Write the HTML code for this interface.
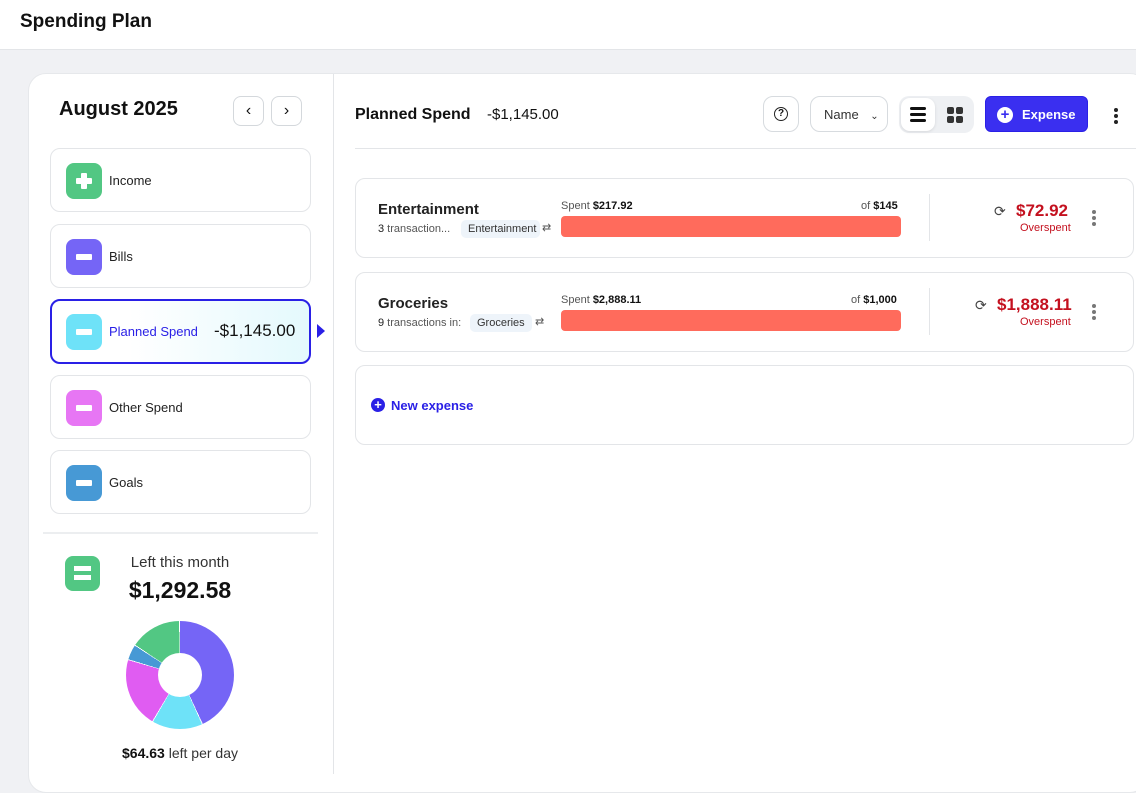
<!DOCTYPE html>
<html><head><meta charset="utf-8"><style>
*{box-sizing:border-box;margin:0;padding:0}
body{width:1136px;height:770px;overflow:hidden;background:#f0f1f4;font-family:"Liberation Sans",sans-serif;color:#111;position:relative}
.a{position:absolute}
.hdr{left:0;top:0;width:1136px;height:50px;background:#fff;border-bottom:1px solid #e3e5e8}
.main{left:28px;top:73px;width:1120px;height:720px;background:#fff;border-radius:18px;border:1px solid #e6e8eb}
.cat{left:50px;width:261px;height:64px;border:1px solid #e3e5e8;border-radius:10px;background:#fff}
.ic{position:absolute;left:15px;top:14px;width:36px;height:36px;border-radius:8px}
.ic i{position:absolute;left:10px;top:15px;width:16px;height:6px;background:#fff;border-radius:1px}
.cat span{position:absolute;left:58px;top:24px;font-size:13px;color:#222}
.btn{border:1px solid #d7dbdf;border-radius:10px;background:#fff;height:36px;top:96px}
.card{left:355px;width:779px;border:1px solid #e3e5e8;border-radius:10px;background:#fff}
.bar{position:absolute;left:205px;width:340px;height:21px;background:#ff6b5c;border-radius:4px}
.sm{font-size:11px;color:#555}
.tag{position:absolute;background:#eef4fa;border-radius:5px;font-size:11px;color:#333;padding:3px 7px}
.red{color:#c4111f}
.dots{position:absolute;width:4px}
.dots b{display:block;width:4px;height:4px;border-radius:50%;background:#777;margin-bottom:2px}
</style></head><body>
<div class="a hdr"><div class="a" style="left:20px;top:11px;font-size:19px;font-weight:bold;color:#111">Spending Plan</div></div>
<div class="a main"></div>
<div class="a" style="left:333px;top:74px;width:1px;height:700px;background:#e3e5e8"></div>

<div class="a" style="left:59px;top:98px;font-size:20px;font-weight:bold">August 2025</div>
<div class="a" style="left:233px;top:96px;width:31px;height:30px;border:1px solid #d4d8dc;border-radius:8px;text-align:center;line-height:27px;font-size:16px">‹</div>
<div class="a" style="left:271px;top:96px;width:31px;height:30px;border:1px solid #d4d8dc;border-radius:8px;text-align:center;line-height:27px;font-size:16px">›</div>

<div class="a cat" style="top:148px"><div class="ic" style="background:#52c783"><i style="left:10px;top:15px;width:16px;height:6px"></i><i style="left:15px;top:10px;width:6px;height:16px"></i></div><span>Income</span></div>
<div class="a cat" style="top:224px"><div class="ic" style="background:#7565f6"><i></i></div><span>Bills</span></div>
<div class="a cat" style="top:299px;height:65px;border:2px solid #2a20e6;background:linear-gradient(90deg,#fff 30%,#e4f9fd)"><div class="ic" style="left:14px;top:13px;background:#6ee2f8"><i></i></div><span style="left:57px;top:23px;color:#2a20e6">Planned Spend</span><span style="left:162px;top:20px;font-size:17px;color:#111">-$1,145.00</span></div>
<div class="a" style="left:317px;top:324px;width:0;height:0;border-top:7px solid transparent;border-bottom:7px solid transparent;border-left:8px solid #2a20e6"></div>
<div class="a cat" style="top:375px"><div class="ic" style="background:#e776f4"><i></i></div><span>Other Spend</span></div>
<div class="a cat" style="top:450px"><div class="ic" style="background:#4799d5"><i></i></div><span>Goals</span></div>
<div class="a" style="left:43px;top:532px;width:275px;height:2px;background:#eceef0"></div>

<div class="a" style="left:65px;top:556px;width:35px;height:35px;border-radius:8px;background:#52c783"><i class="a" style="left:9px;top:10px;width:17px;height:5px;background:#fff"></i><i class="a" style="left:9px;top:19px;width:17px;height:5px;background:#fff"></i></div>
<div class="a" style="left:80px;top:554px;width:200px;text-align:center;font-size:15px;color:#333">Left this month</div>
<div class="a" style="left:80px;top:577px;width:200px;text-align:center;font-size:23px;font-weight:bold">$1,292.58</div>
<div class="a" style="left:126px;top:621px;width:108px;height:108px;border-radius:50%;background:conic-gradient(#7565f6 0 155deg,#fff 155deg 156deg,#6ee2f8 156deg 210deg,#fff 210deg 211deg,#e05cf2 211deg 286deg,#fff 286deg 287deg,#4799d5 287deg 303deg,#fff 303deg 304deg,#52c783 304deg 359deg,#fff 359deg)"></div>
<div class="a" style="left:158px;top:653px;width:44px;height:44px;border-radius:50%;background:#fff"></div>
<div class="a" style="left:80px;top:745px;width:200px;text-align:center;font-size:14px;color:#333"><b style="color:#111">$64.63</b> left per day</div>

<div class="a" style="left:355px;top:106px;font-size:16px;font-weight:bold">Planned Spend</div>
<div class="a" style="left:487px;top:106px;font-size:15px">-$1,145.00</div>
<div class="a btn" style="left:763px;width:36px"><div class="a" style="left:10px;top:10px;width:14px;height:14px;border:1.5px solid #222;border-radius:50%;font-size:10px;text-align:center;line-height:11px;font-weight:bold">?</div></div>
<div class="a btn" style="left:810px;width:78px;font-size:13px;color:#333;padding:10px 0 0 13px">Name <span style="margin-left:8px;font-size:10px">⌄</span></div>
<div class="a" style="left:899px;top:96px;width:75px;height:37px;border-radius:10px;background:#eef0f3"></div>
<div class="a" style="left:901px;top:98px;width:34px;height:33px;border-radius:9px;background:#fff;box-shadow:0 1px 3px rgba(0,0,0,.1)"><b class="a" style="left:9px;top:9px;width:16px;height:3px;background:#111;border-radius:2px"></b><b class="a" style="left:9px;top:15px;width:16px;height:3px;background:#111;border-radius:2px"></b><b class="a" style="left:9px;top:21px;width:16px;height:3px;background:#111;border-radius:2px"></b></div>
<div class="a" style="left:947px;top:107px;width:16px;height:16px"><b class="a" style="left:0;top:0;width:7px;height:7px;background:#333;border-radius:2px"></b><b class="a" style="left:9px;top:0;width:7px;height:7px;background:#333;border-radius:2px"></b><b class="a" style="left:0;top:9px;width:7px;height:7px;background:#333;border-radius:2px"></b><b class="a" style="left:9px;top:9px;width:7px;height:7px;background:#333;border-radius:2px"></b></div>
<div class="a" style="left:985px;top:96px;width:103px;height:36px;border-radius:6px;background:#3a2ff0;border:1px solid #2a20e6;color:#fff;font-size:13px;font-weight:bold;padding:10px 0 0 36px">Expense<div class="a" style="left:11px;top:10px;width:16px;height:16px;border-radius:50%;background:#fff;color:#3a2ff0;text-align:center;line-height:15px;font-size:15px">+</div></div>
<div class="dots a" style="left:1114px;top:108px"><b style="background:#222"></b><b style="background:#222"></b><b style="background:#222"></b></div>
<div class="a" style="left:355px;top:148px;width:781px;height:1px;background:#e3e5e8"></div>

<div class="a card" style="top:178px;height:80px">
 <div class="a" style="left:22px;top:22px;font-size:15px;font-weight:bold;color:#222">Entertainment</div>
 <div class="a sm" style="left:22px;top:44px"><b style="color:#222;font-weight:normal">3</b> transaction...</div>
 <div class="tag" style="left:105px;top:41px;width:79px;overflow:hidden;white-space:nowrap">Entertainment</div>
 <div class="a sm" style="left:186px;top:42px">⇄</div>
 <div class="a sm" style="left:205px;top:21px">Spent <b style="color:#111">$217.92</b></div>
 <div class="a sm" style="left:505px;top:21px">of <b style="color:#111">$145</b></div>
 <div class="bar" style="top:37px"></div>
 <div class="a" style="left:573px;top:15px;width:1px;height:47px;background:#e3e5e8"></div>
 <div class="a" style="left:638px;top:24px;font-size:14px;color:#444">⟳</div>
 <div class="a red" style="left:660px;top:22px;font-size:17px;font-weight:bold">$72.92</div>
 <div class="a red" style="left:664px;top:43px;font-size:11px">Overspent</div>
 <div class="dots" style="left:736px;top:31px"><b></b><b></b><b></b></div>
</div>
<div class="a card" style="top:272px;height:80px">
 <div class="a" style="left:22px;top:22px;font-size:15px;font-weight:bold;color:#222">Groceries</div>
 <div class="a sm" style="left:22px;top:44px"><b style="color:#222;font-weight:normal">9</b> transactions in:</div>
 <div class="tag" style="left:114px;top:41px">Groceries</div>
 <div class="a sm" style="left:179px;top:42px">⇄</div>
 <div class="a sm" style="left:205px;top:21px">Spent <b style="color:#111">$2,888.11</b></div>
 <div class="a sm" style="left:495px;top:21px">of <b style="color:#111">$1,000</b></div>
 <div class="bar" style="top:37px"></div>
 <div class="a" style="left:573px;top:15px;width:1px;height:47px;background:#e3e5e8"></div>
 <div class="a" style="left:619px;top:24px;font-size:14px;color:#444">⟳</div>
 <div class="a red" style="left:641px;top:22px;font-size:17px;font-weight:bold">$1,888.11</div>
 <div class="a red" style="left:664px;top:43px;font-size:11px">Overspent</div>
 <div class="dots" style="left:736px;top:31px"><b></b><b></b><b></b></div>
</div>
<div class="a card" style="top:365px;height:80px">
 <div class="a" style="left:15px;top:32px;width:14px;height:14px;border-radius:50%;background:#2a20e6;color:#fff;font-size:13px;line-height:13px;text-align:center;font-weight:bold">+</div>
 <div class="a" style="left:35px;top:32px;font-size:13px;font-weight:bold;color:#2a20e6">New expense</div>
</div>
</body></html>
